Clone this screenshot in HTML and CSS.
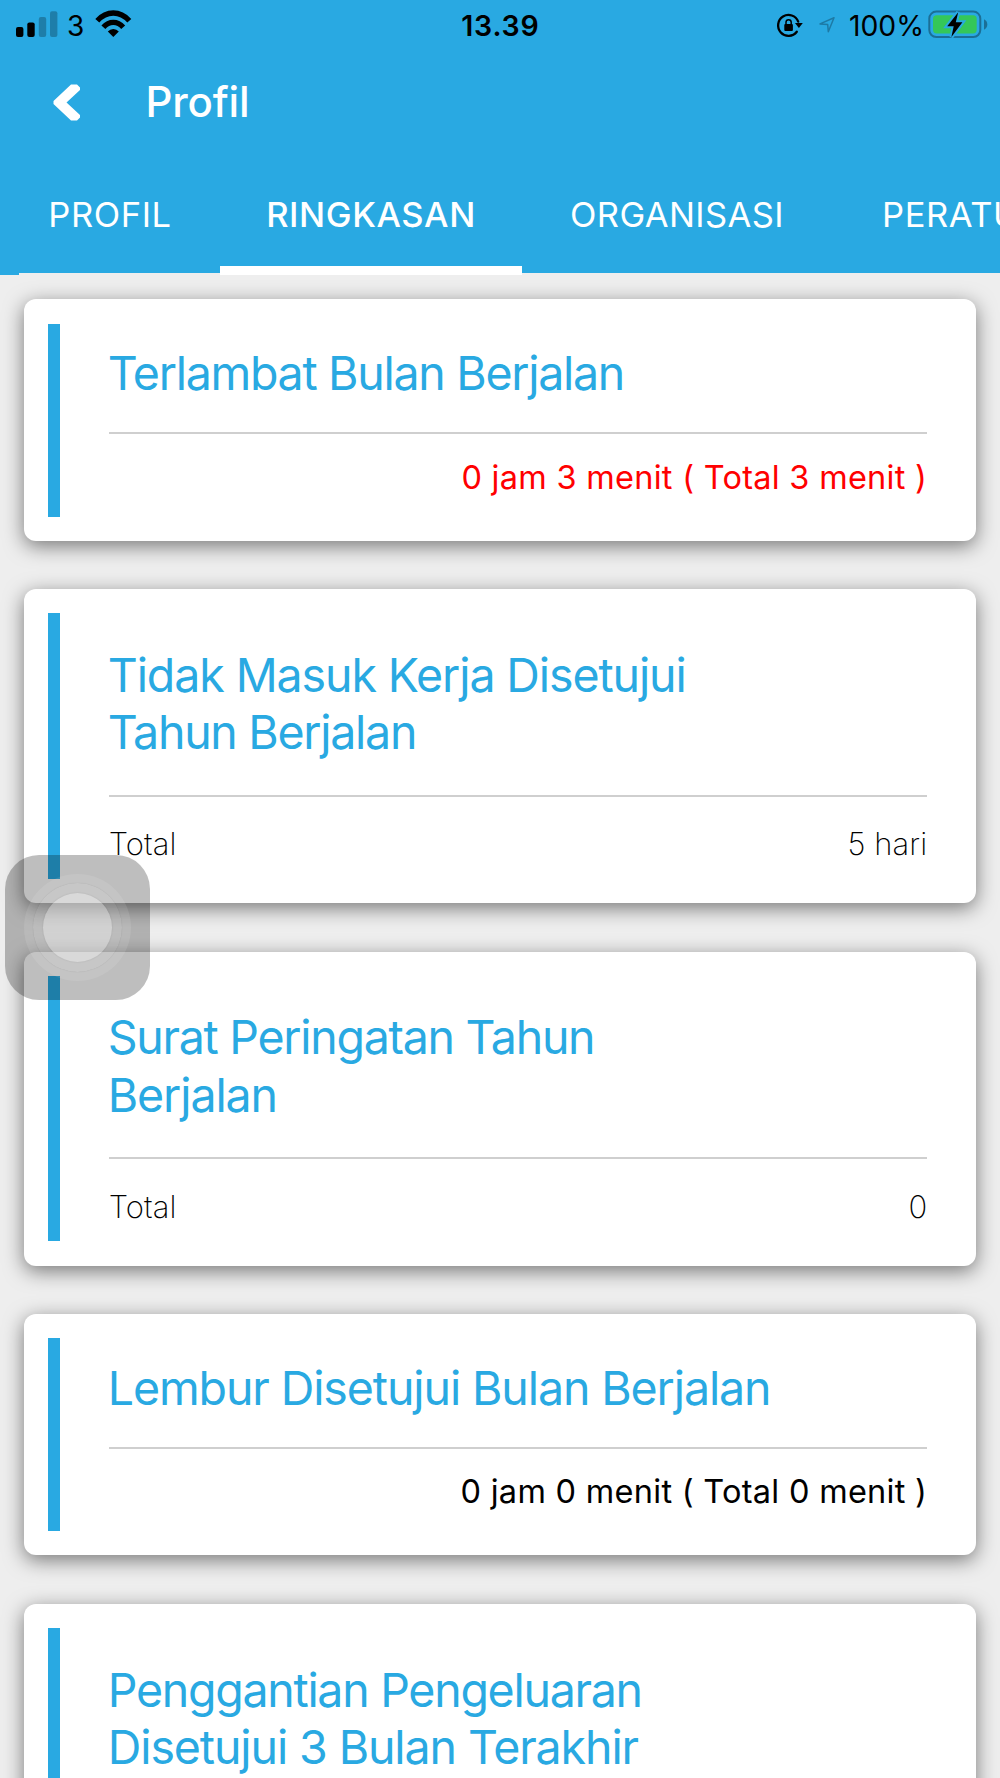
FILE: index.html
```html
<!DOCTYPE html>
<html lang="id">
<head>
<meta charset="utf-8">
<title>Profil</title>
<link rel="stylesheet" href="styles.css">
</head>
<body>
<header class="header">
  <div class="status">
    <div class="status-side">
      <svg width="67" height="48" viewBox="0 0 67 48">
        <rect x="16" y="27" width="7.4" height="10" rx="2"/>
        <rect x="27.3" y="22.5" width="7.4" height="14.5" rx="2"/>
        <g fill-opacity=".25"><rect x="38.8" y="17" width="7.4" height="20" rx="2"/><rect x="50" y="11.3" width="7.4" height="25.7" rx="2"/></g>
      </svg>
      <span class="carrier">3</span>
      <svg width="46" height="48" viewBox="90 0 46 48" fill="none" stroke="#000">
        <path d="M97.3 20.7Q104.3 13 113.3 13T129.3 20.7" stroke-width="5.4"/>
        <path d="M103.4 27.2Q107.6 22.3 113.3 22.3T123.2 27.2" stroke-width="5.2"/>
        <path d="M113.3 37.1L107.8 31.6Q110 28.9 113.3 28.9T118.8 31.6Z" fill="#000" stroke="none"/>
      </svg>
    </div>
    <time class="clock">13.39</time>
    <div class="status-side status-end">
      <svg width="79" height="48" viewBox="770 0 79 48">
        <path d="M796.8 31.7A10.4 10.4 0 1 1 798.2 21.6" fill="none" stroke="#000" stroke-width="2.3" stroke-linecap="round"/>
        <path d="M795 22.9h7.8l-3.9 5.2z"/>
        <rect x="784.3" y="24" width="8.6" height="7" rx="1"/>
        <path d="M786 24.5v-2.2a2.6 2.6 0 0 1 5.2 0v2.2" fill="none" stroke="#000" stroke-width="1.5"/>
        <path d="M834 17.8L820 23.9l7.7.7.6 7.2z" fill="none" stroke="#1d7aa5" stroke-width="1.5" stroke-linejoin="round"/>
      </svg>
      <span class="percent">100%</span>
      <svg width="76" height="48" viewBox="924 0 76 48">
        <rect x="929.3" y="11.6" width="51" height="25.5" rx="7" fill="none" stroke="#1b6f96" stroke-width="2"/>
        <rect x="933" y="15.2" width="43.7" height="18.2" rx="3.7" fill="#34c759"/>
        <path d="M984 19.3v10.4q3.3-1.6 3.3-5.2t-3.3-5.2z" fill="#1b6f96"/>
        <path d="M958.2 12.2L947.2 26.2H953.7L951.4 37L962.4 22.2H955.8Z" stroke="#29a9e2" stroke-width="4"/>
        <path d="M958.2 12.2L947.2 26.2H953.7L951.4 37L962.4 22.2H955.8Z"/>
      </svg>
    </div>
  </div>
  <div class="titlebar">
    <svg class="back" width="28" height="37" viewBox="0 0 28 37"><path d="M18 .5H24L27 3.5V6L13.5 18.5L27 31V33.5L24 36.5H18L.5 20V17Z" fill="#fff"/></svg>
    <h1 class="page-title">Profil</h1>
  </div>
  <nav class="tabs">
    <a class="tab tab-profil">PROFIL</a>
    <a class="tab tab-ringkasan">RINGKASAN</a>
    <a class="tab tab-organisasi">ORGANISASI</a>
    <a class="tab tab-peraturan">PERATURAN</a>
  </nav>
</header>
<main class="cards">
  <section class="card">
    <div class="accent"></div>
    <div class="body">
      <h2 class="heading snug">Terlambat Bulan Berjalan</h2>
      <div class="row late"><span>0 jam 3 menit ( Total 3 menit )</span></div>
    </div>
  </section>
  <section class="card tall">
    <div class="accent"></div>
    <div class="body">
      <h2 class="heading">Tidak Masuk Kerja Disetujui<br><span class="snug">Tahun Berjalan</span></h2>
      <div class="row"><span class="label">Total</span><span>5 hari</span></div>
    </div>
  </section>
  <section class="card tall">
    <div class="accent"></div>
    <div class="body">
      <h2 class="heading"><span class="snug">Surat Peringatan Tahun</span><br>Berjalan</h2>
      <div class="row"><span class="label">Total</span><span>0</span></div>
    </div>
  </section>
  <section class="card">
    <div class="accent"></div>
    <div class="body">
      <h2 class="heading">Lembur Disetujui Bulan Berjalan</h2>
      <div class="row"><span>0 jam 0 menit ( Total 0 menit )</span></div>
    </div>
  </section>
  <section class="card tall">
    <div class="accent"></div>
    <div class="body">
      <h2 class="heading"><span class="snug">Penggantian Pengeluaran</span><br>Disetujui 3 Bulan Terakhir</h2>
    </div>
  </section>
</main>
<div class="assistive"><div class="ring"><div class="ring-mid"><div class="knob"></div></div></div></div>
</body>
</html>
```
FILE: styles.css
```css
* { box-sizing: border-box; }
html, body { margin: 0; height: 1778px; overflow: hidden; }
body { background: #eee; font-family: Inter, "Liberation Sans", sans-serif; color: #000; }
svg { display: block; flex: none; }
h1, h2 { margin: 0; font-weight: 400; }

.header { position: relative; z-index: 1; height: 273px; background: #29a9e2; color: #fff; }
.status { display: grid; grid-template-columns: 1fr auto 1fr; height: 48px; line-height: 52px; color: #000; }
.status-side { display: flex; height: 48px; }
.status-end { justify-content: flex-end; }
.carrier { width: 23px; font-size: 28px; }
.clock { font-size: 28.5px; font-weight: 600; letter-spacing: .8px; margin-right: -.8px; }
.percent { width: 75px; font-size: 28.3px; white-space: nowrap; }

.titlebar { display: flex; align-items: center; height: 110px; padding: 0 0 2px 53px; }
.page-title { margin-left: 64.5px; font-size: 42px; font-weight: 500; line-height: 50px; letter-spacing: -.2px; }

.tabs { display: flex; height: 117.4px; overflow: hidden; font-size: 34.5px; line-height: 114px; text-align: center; letter-spacing: .6px; background: linear-gradient(#29a9e2, #29a9e2) 0 0 / 19px 100% no-repeat; }
.tab { flex: none; }
.tab-profil { width: 220px; }
.tab-ringkasan { width: 302px; font-weight: 500; border-bottom: 9.7px solid #fff; }
.tab-organisasi { width: 310px; letter-spacing: .4px; }
.tab-peraturan { padding-left: 50px; }

.cards { display: flex; flex-direction: column; gap: 48.3px; height: 1505px; overflow: hidden; padding: 26.4px 24.2px 0; }
.card { display: flex; flex: none; height: 241.5px; padding: 24.2px 48.6px 24.2px 24.2px; background: #fff; border-radius: 12px; box-shadow: 0 5px 20px rgba(0, 0, 0, .5); }
.card.tall { height: 314.1px; }
.accent { flex: none; width: 12px; margin-right: 48.4px; background: #29a9e2; }
.body { flex: 1; padding-top: 21.9px; }
.heading { margin-left: -1px; padding-bottom: 29.3px; font-size: 46.5px; line-height: 57.4px; letter-spacing: -1.1px; color: #29a9e2; white-space: nowrap; }
.snug { letter-spacing: -1.28px; }
.row { display: flex; justify-content: flex-end; padding-top: 23.7px; border-top: 2.5px solid #cfcfcf; font-size: 32.5px; line-height: 40px; letter-spacing: .28px; }
.late { color: #f00; }
.tall .body { padding-top: 33.6px; }
.tall .heading { padding-bottom: 33.2px; }
.tall .row { justify-content: space-between; padding-top: 27.5px; font-size: 31px; font-weight: 200; letter-spacing: .1px; }

.assistive { position: absolute; z-index: 2; left: 5px; top: 855px; display: grid; place-items: center; width: 145px; height: 145px; border-radius: 34px; background: rgba(0, 0, 0, .255); }
.ring, .ring-mid, .knob { display: grid; place-items: center; border-radius: 50%; }
.ring { width: 107px; height: 107px; background: rgba(255, 255, 255, .1); }
.ring-mid { width: 89px; height: 89px; background: rgba(255, 255, 255, .06); box-shadow: 0 0 1px rgba(0, 0, 0, .15); }
.knob { width: 69px; height: 69px; background: rgba(255, 255, 255, .32); box-shadow: 0 0 2px rgba(0, 0, 0, .12); }
```
